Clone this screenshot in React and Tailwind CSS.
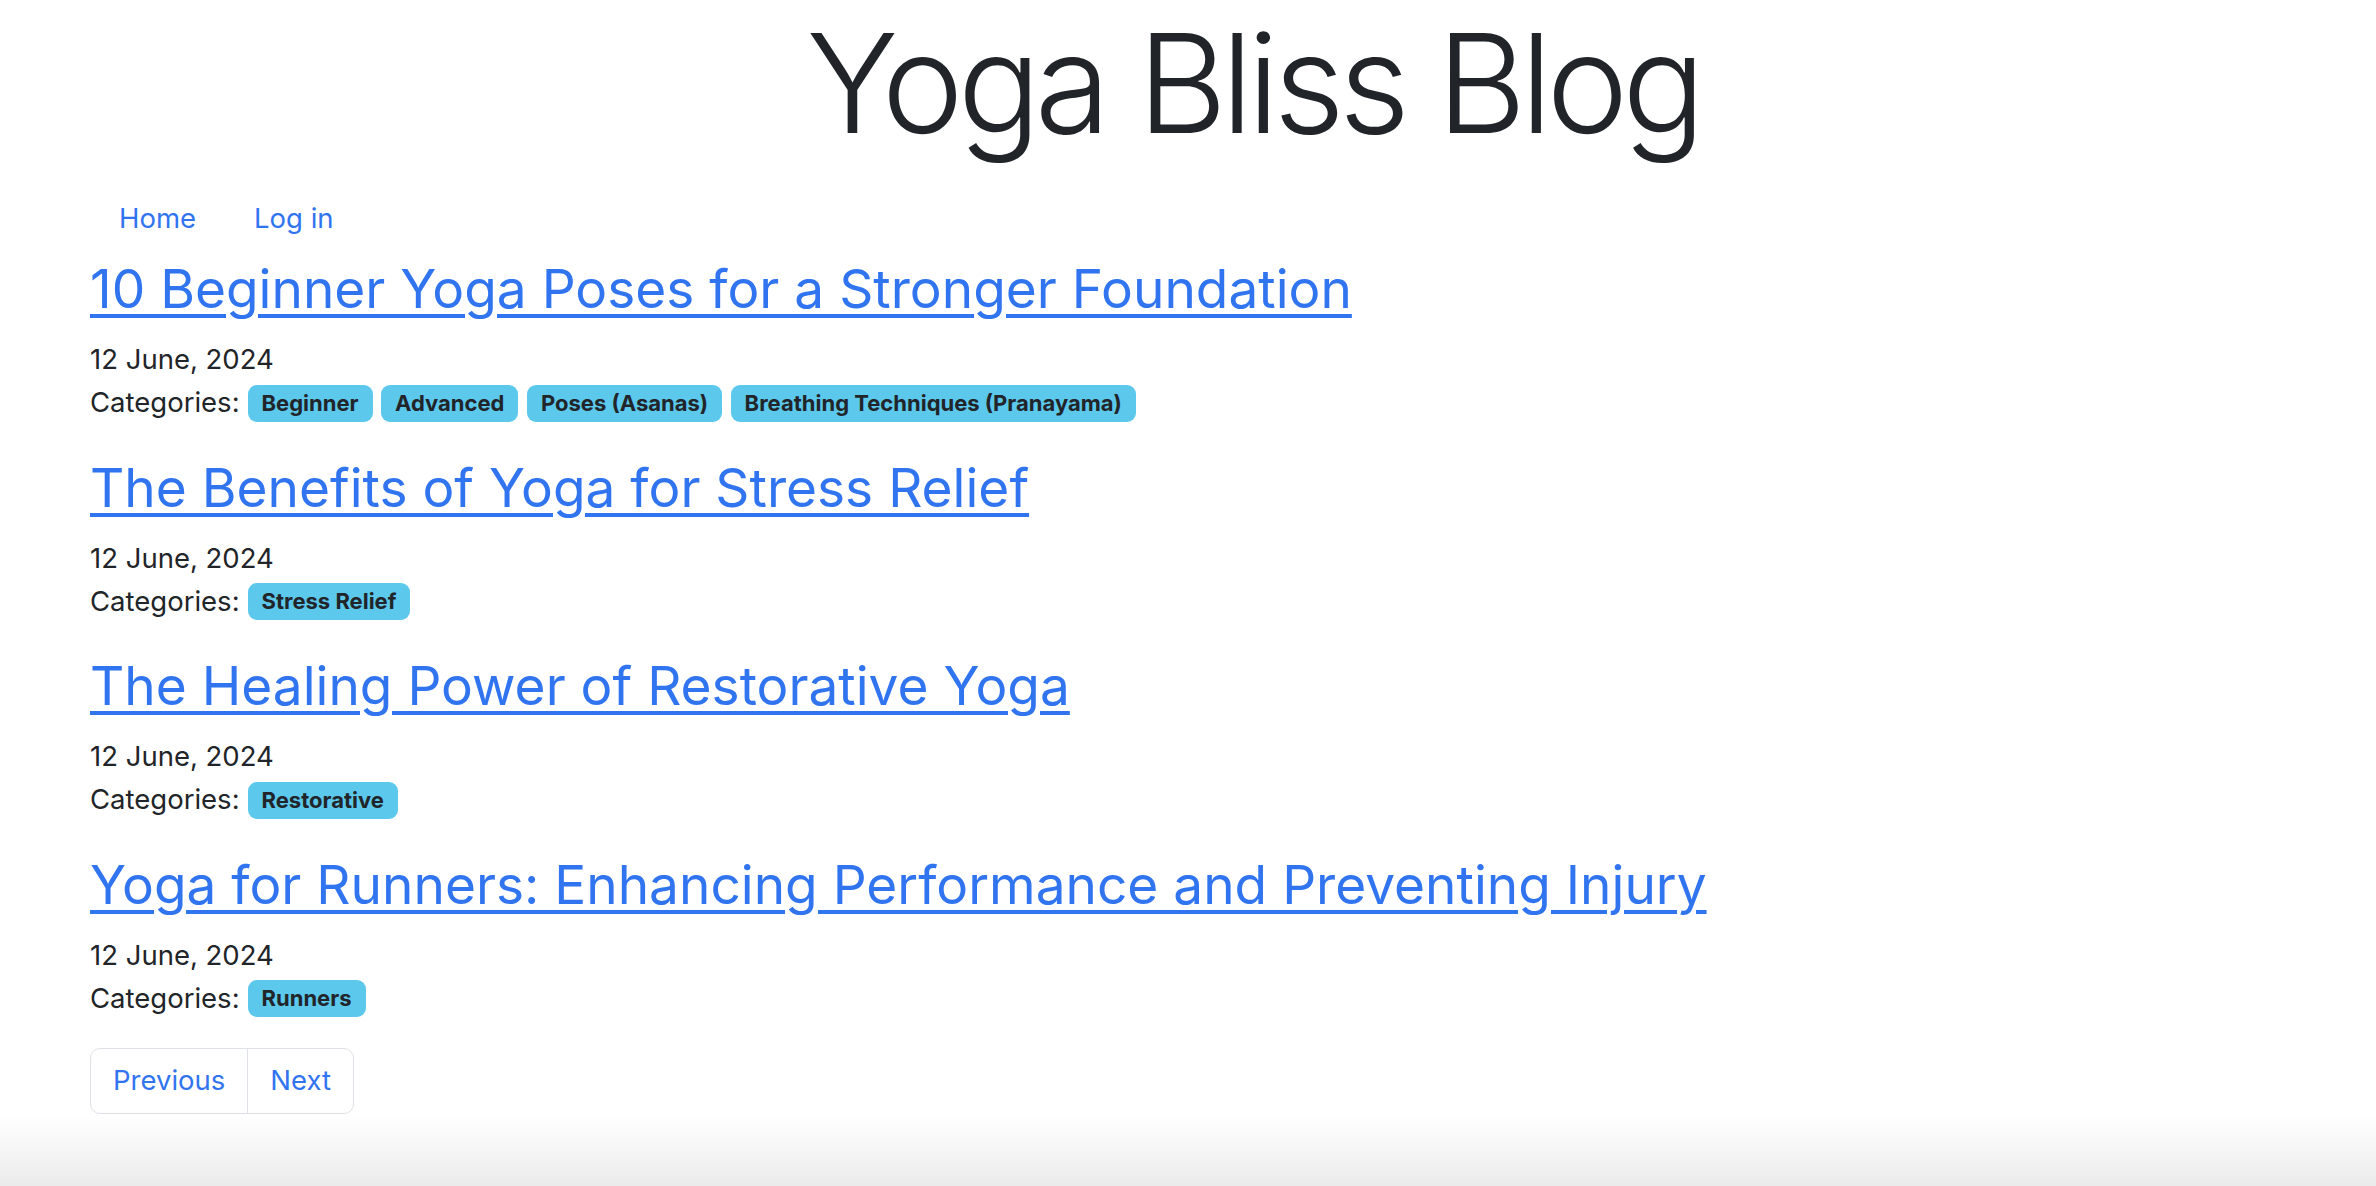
import React from "react";

const posts = [
  {
    title: "10 Beginner Yoga Poses for a Stronger Foundation",
    date: "12 June, 2024",
    cats: ["Beginner", "Advanced", "Poses (Asanas)", "Breathing Techniques (Pranayama)"],
  },
  { title: "The Benefits of Yoga for Stress Relief", date: "12 June, 2024", cats: ["Stress Relief"] },
  { title: "The Healing Power of Restorative Yoga", date: "12 June, 2024", cats: ["Restorative"] },
  {
    title: "Yoga for Runners: Enhancing Performance and Preventing Injury",
    date: "12 June, 2024",
    cats: ["Runners"],
  },
];

export default function App() {
  return (
    <div className="min-h-[1186px] bg-white text-[#212529] font-['Inter','Liberation_Sans',sans-serif]">
      <header className="pl-[130px] text-center">
        <h1 className="mt-[-1px] text-[138px] leading-[168px] font-light tracking-[-6px]">Yoga Bliss Blog</h1>
      </header>
      <main className="px-[90px]">
        <nav className="mt-[31px] flex">
          <a href="#" className="px-[29px] text-[27.5px] leading-[40px] text-[#3174f0]">Home</a>
          <a href="#" className="px-[29px] text-[27.5px] leading-[40px] text-[#3174f0]">Log in</a>
        </nav>
        <div className="mt-[18px] flex flex-col gap-[30px]">
          {posts.map((p) => (
            <article key={p.title}>
              <h2 className="text-[53.2px] leading-[65px] font-normal">
                <a href="#" className="text-[#3174f0] underline decoration-[4px] underline-offset-[6px]">{p.title}</a>
              </h2>
              <div className="mt-[16px] text-[27.5px] leading-[44.5px]">{p.date}</div>
              <div className="flex h-[43px] items-center text-[27.5px]">
                <span className="mr-[8px]">Categories:</span>
                <div className="flex gap-[8.5px]">
                  {p.cats.map((c) => (
                    <span
                      key={c}
                      className="flex h-[37px] items-center rounded-[9px] bg-[#5bc8ec] px-[14px] text-[22px] font-bold text-[#212529]"
                    >
                      {c}
                    </span>
                  ))}
                </div>
              </div>
            </article>
          ))}
        </div>
        <div className="mt-[28px] inline-flex h-[66px] rounded-[10px] border border-[#dee2e6] text-[27.5px] text-[#3174f0]">
          <a href="#" className="flex items-center border-r border-[#dee2e6] px-[22px]">Previous</a>
          <a href="#" className="flex items-center px-[22px]">Next</a>
        </div>
      </main>
      <div className="pointer-events-none fixed bottom-0 left-0 right-0 h-[70px] bg-gradient-to-b from-transparent to-black/[0.08]" />
    </div>
  );
}
